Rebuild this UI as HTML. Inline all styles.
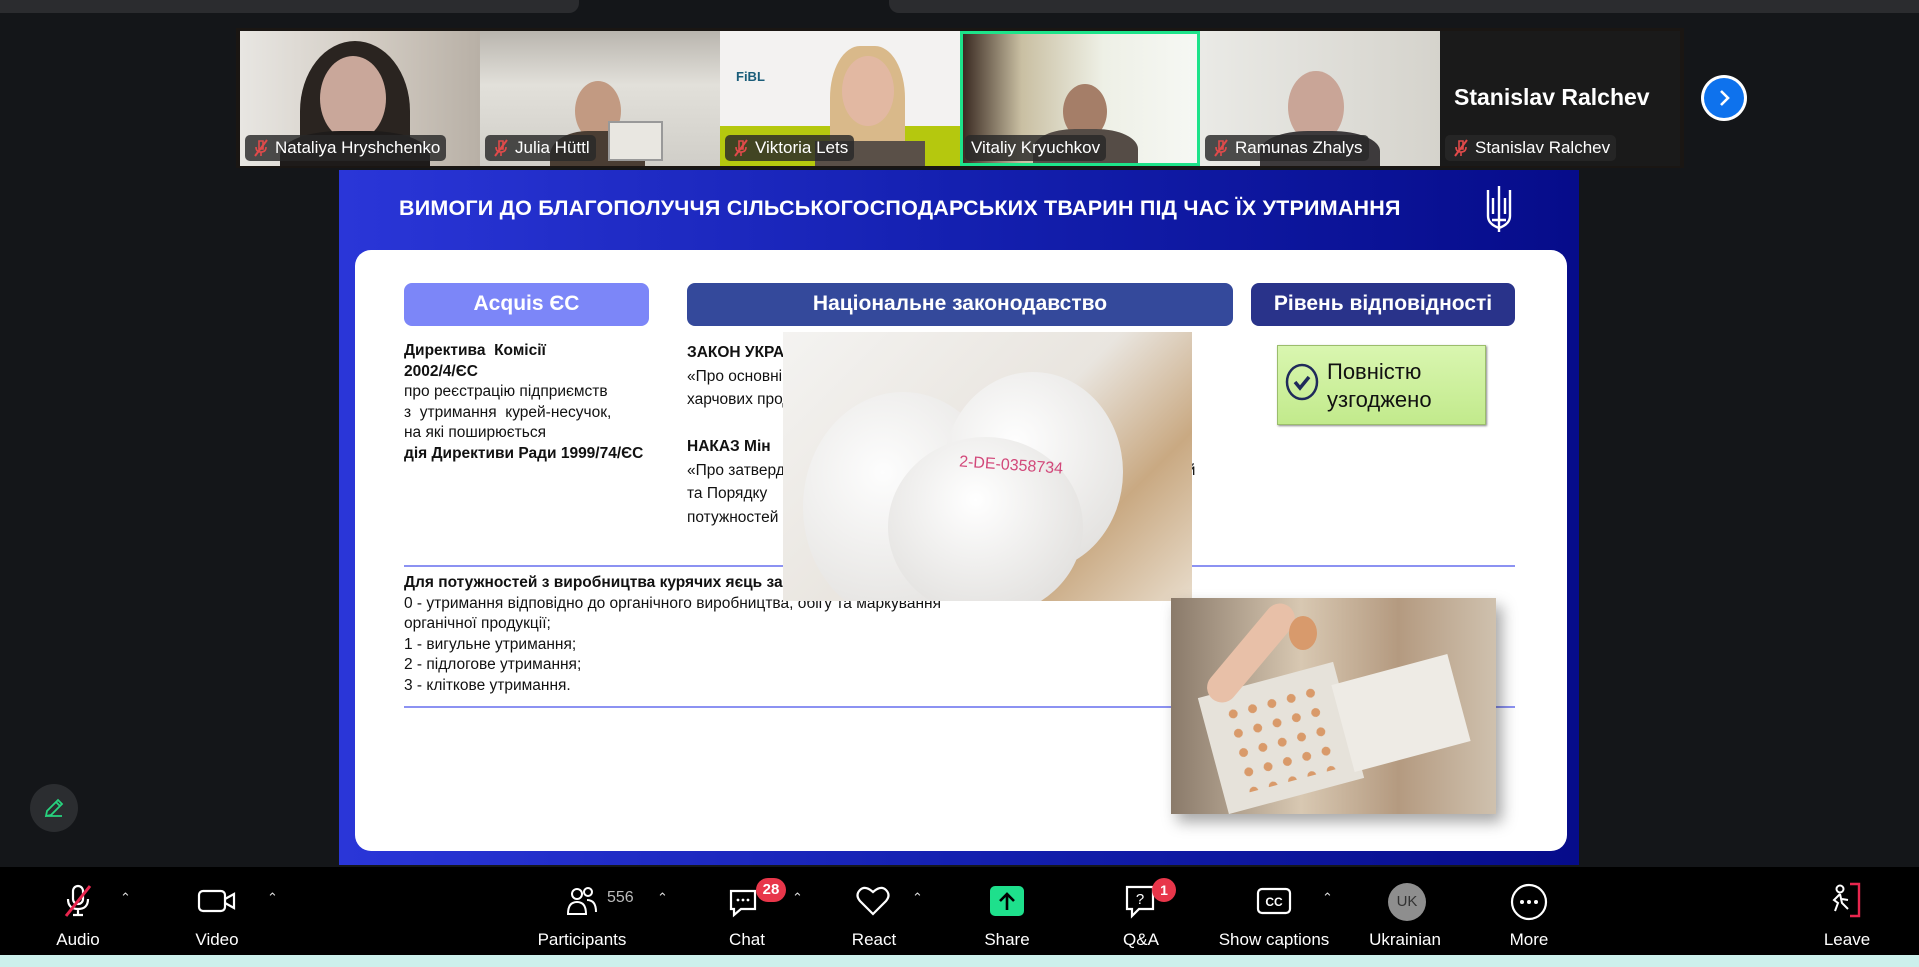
<!DOCTYPE html>
<html><head><meta charset="utf-8"><style>
*{margin:0;padding:0;box-sizing:border-box}
body{width:1919px;height:967px;background:#141619;position:relative;overflow:hidden;font-family:"Liberation Sans","DejaVu Sans",sans-serif;color:#fff}
.abs{position:absolute}
.tile{position:absolute;top:31px;height:135px;width:240px;overflow:hidden}
.lbl{position:absolute;left:5px;bottom:5px;height:26px;background:rgba(40,40,40,.82);border-radius:5px;font-size:17px;line-height:26px;padding:0 6px 0 30px;color:#fff;white-space:nowrap}
.lbl.nm{padding-left:6px}
.mic{position:absolute;left:8px;top:4px;width:16px;height:18px}
.st{font-size:15.5px;color:#111;line-height:20.5px;position:absolute;font-family:"Liberation Sans Narrow","Liberation Sans",sans-serif}
.hdr{position:absolute;top:283px;height:43px;border-radius:8px;color:#fff;font-weight:bold;font-size:21px;text-align:center;line-height:42px}
.tb{position:absolute;top:930px;font-size:17px;color:#fff;transform:translateX(-50%);white-space:nowrap}
.car{position:absolute;top:890px;font-size:13px;color:#ddd}
</style></head><body>
<!-- top panels -->
<div class="abs" style="left:0;top:0;width:579px;height:13px;background:#2b2c2f;border-radius:0 0 10px 0"></div>
<div class="abs" style="left:889px;top:0;width:1030px;height:13px;background:#2b2c2f;border-radius:0 0 0 10px"></div>
<!-- strip -->
<div class="abs" style="left:236px;top:28px;width:1448px;height:140px;background:#1a1613"></div>
<div class="tile" style="left:240px;background:linear-gradient(90deg,#e8e6e2,#cfc8bf 60%,#b8b0a6)">
 <div class="abs" style="left:60px;top:10px;width:110px;height:140px;border-radius:50% 50% 0 0;background:#2a2420"></div>
 <div class="abs" style="left:80px;top:25px;width:66px;height:85px;border-radius:50%;background:#c9a79a"></div>
 <div class="abs" style="left:40px;top:100px;width:150px;height:60px;border-radius:40% 40% 0 0;background:#1e1b1a"></div>
 <div class="lbl"><svg class="mic" viewBox="0 0 16 18"><path d="M6 2h4v8H6z M3 8q0 5 5 5t5-5 M8 13v4" stroke="#e04a4a" fill="none" stroke-width="1.6"/><path d="M2 17L14 1" stroke="#e04a4a" stroke-width="2"/></svg>Nataliya Hryshchenko</div></div>
<div class="tile" style="left:480px;background:linear-gradient(180deg,#b9b5ae,#e2e0da 40%,#d0cec8)">
 <div class="abs" style="left:95px;top:50px;width:46px;height:60px;border-radius:50%;background:#c29a82"></div>
 <div class="abs" style="left:70px;top:100px;width:95px;height:60px;border-radius:40% 40% 0 0;background:#4a3d33"></div>
 <div class="abs" style="left:128px;top:90px;width:55px;height:40px;background:#e9e7e1;border:2px solid #999"></div>
 <div class="lbl"><svg class="mic" viewBox="0 0 16 18"><path d="M6 2h4v8H6z M3 8q0 5 5 5t5-5 M8 13v4" stroke="#e04a4a" fill="none" stroke-width="1.6"/><path d="M2 17L14 1" stroke="#e04a4a" stroke-width="2"/></svg>Julia Hüttl</div></div>
<div class="tile" style="left:720px;background:#f3f2f1">
 <div class="abs" style="left:0;top:95px;width:240px;height:40px;background:#b5c80e"></div>
 <div class="abs" style="left:16px;top:38px;font-size:13px;font-weight:bold;color:#1a5d7a">FiBL</div>
 <div class="abs" style="left:110px;top:15px;width:75px;height:130px;border-radius:40% 40% 0 0;background:#d9b98a"></div>
 <div class="abs" style="left:122px;top:25px;width:52px;height:70px;border-radius:50%;background:#e2b8a2"></div>
 <div class="abs" style="left:95px;top:110px;width:110px;height:40px;background:#5a5048"></div>
 <div class="lbl"><svg class="mic" viewBox="0 0 16 18"><path d="M6 2h4v8H6z M3 8q0 5 5 5t5-5 M8 13v4" stroke="#e04a4a" fill="none" stroke-width="1.6"/><path d="M2 17L14 1" stroke="#e04a4a" stroke-width="2"/></svg>Viktoria Lets</div></div>
<div class="tile" style="left:960px;background:linear-gradient(90deg,#3a2a22,#c9bfa2 25%,#eef0e6 60%,#f6f8f4);border:3px solid #1de38a">
 <div class="abs" style="left:100px;top:50px;width:44px;height:55px;border-radius:50%;background:#a57e68"></div>
 <div class="abs" style="left:70px;top:95px;width:105px;height:50px;border-radius:40% 40% 0 0;background:#554c46"></div>
 <div class="lbl nm" style="left:2px;bottom:2px">Vitaliy Kryuchkov</div></div>
<div class="tile" style="left:1200px;background:linear-gradient(90deg,#eaeae6,#d5d3cc)">
 <div class="abs" style="left:88px;top:40px;width:56px;height:72px;border-radius:50%;background:#c9a597"></div>
 <div class="abs" style="left:60px;top:100px;width:120px;height:50px;border-radius:40% 40% 0 0;background:#3d3a3c"></div>
 <div class="lbl"><svg class="mic" viewBox="0 0 16 18"><path d="M6 2h4v8H6z M3 8q0 5 5 5t5-5 M8 13v4" stroke="#e04a4a" fill="none" stroke-width="1.6"/><path d="M2 17L14 1" stroke="#e04a4a" stroke-width="2"/></svg>Ramunas Zhalys</div></div>
<div class="tile" style="left:1440px;background:#1a1a1a">
 <div class="abs" style="left:14px;top:53px;font-size:23px;font-weight:bold;color:#fff">Stanislav Ralchev</div>
 <div class="lbl"><svg class="mic" viewBox="0 0 16 18"><path d="M6 2h4v8H6z M3 8q0 5 5 5t5-5 M8 13v4" stroke="#e04a4a" fill="none" stroke-width="1.6"/><path d="M2 17L14 1" stroke="#e04a4a" stroke-width="2"/></svg>Stanislav Ralchev</div></div>
<div class="abs" style="left:1701px;top:75px;width:46px;height:46px;border-radius:50%;background:#fff"></div>
<div class="abs" style="left:1704px;top:78px;width:40px;height:40px;border-radius:50%;background:#0e72ed"></div>
<svg class="abs" style="left:1714px;top:88px" width="20" height="20" viewBox="0 0 20 20"><path d="M7 3l7 7-7 7" stroke="#fff" stroke-width="2.6" fill="none"/></svg>

<!-- slide -->
<div class="abs" style="left:339px;top:170px;width:1240px;height:695px;background:linear-gradient(90deg,#2a36d8,#1420b0 50%,#060c8a)"></div>
<div class="abs" style="left:399px;top:196px;font-size:21.5px;font-weight:bold;color:#fff;letter-spacing:.2px">ВИМОГИ ДО БЛАГОПОЛУЧЧЯ СІЛЬСЬКОГОСПОДАРСЬКИХ ТВАРИН ПІД ЧАС ЇХ УТРИМАННЯ</div>
<svg class="abs" style="left:1484px;top:184px" width="30" height="50" viewBox="0 0 30 50"><path d="M15 2v46M4 6v26q0 8 11 12 11-4 11-12V6M9 14v16M21 14v16M8 36h14" stroke="#fff" stroke-width="2.4" fill="none"/></svg>
<div class="abs" style="left:355px;top:250px;width:1212px;height:601px;background:#fff;border-radius:16px"></div>
<div class="hdr" style="left:404px;width:245px;background:#7c86f8">Acquis ЄС</div>
<div class="hdr" style="left:687px;width:546px;background:#34499b">Національне законодавство</div>
<div class="hdr" style="left:1251px;width:264px;background:#29338a">Рівень відповідності</div>
<div class="st" style="left:404px;top:341px"><b>Директива&nbsp; Комісії<br>2002/4/ЄС</b><br>про реєстрацію підприємств<br>з&nbsp; утримання&nbsp; курей-несучок,<br>на які поширюється<br><b>дія Директиви Ради 1999/74/ЄС</b></div>
<div class="st" style="left:687px;top:341px;line-height:23.5px"><b>ЗАКОН УКРАЇНИ</b><br>«Про основні принципи<br>харчових продуктів»<br><br><b>НАКАЗ Мін</b><br>«Про затвердження&nbsp;&nbsp;&nbsp;&nbsp;&nbsp;&nbsp;&nbsp;&nbsp;&nbsp;&nbsp;&nbsp;&nbsp;&nbsp;&nbsp;&nbsp;&nbsp;&nbsp;&nbsp;&nbsp;&nbsp;&nbsp;&nbsp;&nbsp;&nbsp;&nbsp;&nbsp;&nbsp;&nbsp;&nbsp;&nbsp;&nbsp;&nbsp;&nbsp;&nbsp;&nbsp;&nbsp;&nbsp;&nbsp;&nbsp;&nbsp;&nbsp;&nbsp;&nbsp;&nbsp;&nbsp;&nbsp;&nbsp;&nbsp;&nbsp;&nbsp;&nbsp;&nbsp;&nbsp;&nbsp;&nbsp;&nbsp;&nbsp;&nbsp;&nbsp;&nbsp;&nbsp;&nbsp;&nbsp;&nbsp;&nbsp;&nbsp;&nbsp;&nbsp;&nbsp;&nbsp;&nbsp;&nbsp;&nbsp;&nbsp;&nbsp;&nbsp;&nbsp;&nbsp;&nbsp;&nbsp; ей<br>та Порядку&nbsp;&nbsp;&nbsp;&nbsp;&nbsp;&nbsp;&nbsp;&nbsp;&nbsp;&nbsp;&nbsp;&nbsp;&nbsp;&nbsp;&nbsp;&nbsp;&nbsp;&nbsp;&nbsp;&nbsp;&nbsp;&nbsp;&nbsp;&nbsp;&nbsp;&nbsp;&nbsp;&nbsp;&nbsp;&nbsp;&nbsp;&nbsp;&nbsp;&nbsp;&nbsp;&nbsp;&nbsp;&nbsp;&nbsp;&nbsp;&nbsp;&nbsp;&nbsp;&nbsp;&nbsp;&nbsp;&nbsp;&nbsp;&nbsp;&nbsp;&nbsp;&nbsp;&nbsp;&nbsp;&nbsp;&nbsp;&nbsp;&nbsp;&nbsp;&nbsp;&nbsp;&nbsp;&nbsp;&nbsp;&nbsp;&nbsp;&nbsp;&nbsp;&nbsp;&nbsp;&nbsp;&nbsp;&nbsp;&nbsp;&nbsp;&nbsp;&nbsp;&nbsp;&nbsp;&nbsp;&nbsp;&nbsp;&nbsp;&nbsp;&nbsp;&nbsp;&nbsp;&nbsp;&nbsp;&nbsp; їхніх<br>потужностей</div>
<div class="abs" style="left:1277px;top:345px;width:209px;height:80px;background:linear-gradient(180deg,#d9f6b0,#c2ea8c);border:1px solid #9bbd6c;box-shadow:1px 1px 2px #888"></div>
<svg class="abs" style="left:1284px;top:362px" width="36" height="40" viewBox="0 0 36 40"><ellipse cx="18" cy="20" rx="15" ry="17" fill="none" stroke="#1f2a5a" stroke-width="2.5"/><path d="M11 20l5 6 9-11" stroke="#1f2a5a" stroke-width="3.5" fill="none"/></svg>
<div class="abs" style="left:1327px;top:358px;font-size:22px;color:#111;line-height:28px;font-family:'Liberation Sans Narrow','Liberation Sans',sans-serif">Повністю<br>узгоджено</div>
<div class="abs" style="left:404px;top:565px;width:1111px;height:2px;background:#8c92f2"></div>
<div class="abs" style="left:404px;top:706px;width:1111px;height:2px;background:#8c92f2"></div>
<div class="st" style="left:404px;top:573px"><b>Для потужностей з виробництва курячих яєць за</b><br>0 - утримання відповідно до органічного виробництва, обігу та маркування<br>органічної продукції;<br>1 - вигульне утримання;<br>2 - підлогове утримання;<br>3 - кліткове утримання.</div>
<!-- egg image -->
<div class="abs" style="left:783px;top:332px;width:409px;height:269px;background:linear-gradient(135deg,#f4f3f1,#e9e5df 50%,#c9a982 75%,#e8dccb);overflow:hidden">
 <div class="abs" style="left:20px;top:60px;width:200px;height:230px;border-radius:50%;background:radial-gradient(circle at 40% 35%,#fdfdfd,#dedcd9)"></div>
 <div class="abs" style="left:160px;top:40px;width:180px;height:200px;border-radius:50%;background:radial-gradient(circle at 40% 35%,#fefefe,#dcdad7)"></div>
 <div class="abs" style="left:105px;top:105px;width:195px;height:180px;border-radius:50%;background:radial-gradient(circle at 45% 35%,#ffffff,#dad8d5)"></div>
 <div class="abs" style="left:176px;top:125px;font-size:16px;color:#d2487a;transform:rotate(4deg)">2-DE-0358734</div>
</div>
<!-- carton image -->
<div class="abs" style="left:1171px;top:598px;width:325px;height:216px;background:linear-gradient(90deg,#8a7a6a,#d8c8b2 40%,#b49a80 70%,#cfc1ae);box-shadow:6px 8px 14px rgba(0,0,0,.35);overflow:hidden">
 <div class="abs" style="left:40px;top:80px;width:140px;height:120px;background:#e6e2da;transform:rotate(-15deg)"></div>
 <div class="abs" style="left:60px;top:95px;width:95px;height:90px;background:radial-gradient(circle,#d99a6a 30%,transparent 32%) 0 0/20px 20px;transform:rotate(-15deg)"></div>
 <div class="abs" style="left:170px;top:70px;width:120px;height:90px;background:#eeebe5;transform:rotate(-15deg)"></div>
 <div class="abs" style="left:20px;top:40px;width:120px;height:30px;border-radius:20px;background:#e8c0a8;transform:rotate(-50deg)"></div>
 <div class="abs" style="left:118px;top:18px;width:28px;height:34px;border-radius:50%;background:#d89a6c"></div>
</div>
<!-- pencil -->
<div class="abs" style="left:30px;top:784px;width:48px;height:48px;border-radius:50%;background:#2b2d30"></div>
<svg class="abs" style="left:43px;top:797px" width="22" height="22" viewBox="0 0 22 22"><path d="M3 19l1-5L15 3l4 4L8 18z M13 5l4 4 M3 19h16" stroke="#27d37e" stroke-width="1.8" fill="none"/></svg>
<!-- toolbar -->
<div class="abs" style="left:0;top:867px;width:1919px;height:88px;background:#000"></div>
<div class="abs" style="left:0;top:955px;width:1919px;height:12px;background:#ccf0ec"></div>
<svg class="abs" style="left:60px;top:883px" width="36" height="36" viewBox="0 0 36 36"><rect x="13" y="3" width="10" height="18" rx="5" stroke="#fff" stroke-width="2.2" fill="none"/><path d="M8 16q0 10 10 10t10-10M18 26v6M13 32h10" stroke="#fff" stroke-width="2.2" fill="none"/><path d="M6 33L30 3" stroke="#e8264e" stroke-width="3"/></svg>
<div class="car" style="left:120px">⌃</div>
<svg class="abs" style="left:197px;top:887px" width="40" height="28" viewBox="0 0 40 28"><rect x="2" y="4" width="26" height="20" rx="4" stroke="#fff" stroke-width="2.2" fill="none"/><path d="M28 12l9-5v14l-9-5" stroke="#fff" stroke-width="2.2" fill="none"/></svg>
<div class="car" style="left:267px">⌃</div>
<svg class="abs" style="left:565px;top:885px" width="34" height="32" viewBox="0 0 34 32"><circle cx="12" cy="9" r="5" stroke="#fff" stroke-width="2" fill="none"/><path d="M3 29q0-12 9-12t9 12z" stroke="#fff" stroke-width="2" fill="none"/><circle cx="23" cy="7" r="4" stroke="#fff" stroke-width="2" fill="none"/><path d="M22 15q9 0 9 12" stroke="#fff" stroke-width="2" fill="none"/></svg>
<div class="abs" style="left:607px;top:889px;font-size:16px;color:#bbb">556</div>
<div class="car" style="left:657px">⌃</div>
<svg class="abs" style="left:727px;top:885px" width="34" height="34" viewBox="0 0 34 34"><path d="M4 6h24v18H14l-7 6v-6H4z" stroke="#fff" stroke-width="2.2" fill="none"/><circle cx="11" cy="15" r="1.4" fill="#fff"/><circle cx="16" cy="15" r="1.4" fill="#fff"/><circle cx="21" cy="15" r="1.4" fill="#fff"/></svg>
<div class="abs" style="left:756px;top:878px;width:30px;height:24px;border-radius:12px;background:#e8364a;font-size:15px;font-weight:bold;text-align:center;line-height:24px">28</div>
<div class="car" style="left:792px">⌃</div>
<svg class="abs" style="left:855px;top:885px" width="36" height="32" viewBox="0 0 36 32"><path d="M18 29L5 16Q0 10 5 5t13 2q8-7 13-2t0 11z" stroke="#fff" stroke-width="2.2" fill="none"/></svg>
<div class="car" style="left:912px">⌃</div>
<div class="abs" style="left:990px;top:886px;width:34px;height:30px;border-radius:5px;background:#1ee08c"></div>
<svg class="abs" style="left:997px;top:890px" width="20" height="22" viewBox="0 0 20 22"><path d="M10 20V4M3 11l7-7 7 7" stroke="#000" stroke-width="2.6" fill="none"/></svg>
<svg class="abs" style="left:1124px;top:884px" width="34" height="36" viewBox="0 0 34 36"><path d="M3 3h26v22H15l-7 7v-7H3z" stroke="#fff" stroke-width="2.2" fill="none"/><text x="16" y="20" font-size="15" fill="#fff" text-anchor="middle" font-family="Liberation Sans">?</text></svg>
<div class="abs" style="left:1152px;top:878px;width:24px;height:24px;border-radius:12px;background:#e8364a;font-size:14px;font-weight:bold;text-align:center;line-height:24px">1</div>
<svg class="abs" style="left:1256px;top:887px" width="36" height="28" viewBox="0 0 36 28"><rect x="2" y="2" width="32" height="24" rx="4" stroke="#fff" stroke-width="2.2" fill="none"/><text x="18" y="19" font-size="12" fill="#fff" text-anchor="middle" font-weight="bold" font-family="Liberation Sans">CC</text></svg>
<div class="car" style="left:1322px">⌃</div>
<div class="abs" style="left:1388px;top:883px;width:38px;height:38px;border-radius:50%;background:#8e8e8e;font-size:15px;text-align:center;line-height:38px;color:#333">UK</div>
<svg class="abs" style="left:1510px;top:883px" width="38" height="38" viewBox="0 0 38 38"><circle cx="19" cy="19" r="17" stroke="#fff" stroke-width="2.2" fill="none"/><circle cx="12" cy="19" r="2" fill="#fff"/><circle cx="19" cy="19" r="2" fill="#fff"/><circle cx="26" cy="19" r="2" fill="#fff"/></svg>
<svg class="abs" style="left:1828px;top:882px" width="34" height="38" viewBox="0 0 34 38"><path d="M22 2h9v32h-9" stroke="#e8264e" stroke-width="2.4" fill="none"/><circle cx="12" cy="7" r="3.5" stroke="#fff" stroke-width="2" fill="none"/><path d="M12 12l-6 6 4 3-3 8M12 12l2 9 6 6M14 17l6 1" stroke="#fff" stroke-width="2" fill="none"/></svg>
<div class="tb" style="left:78px">Audio</div>
<div class="tb" style="left:217px">Video</div>
<div class="tb" style="left:582px">Participants</div>
<div class="tb" style="left:747px">Chat</div>
<div class="tb" style="left:874px">React</div>
<div class="tb" style="left:1007px">Share</div>
<div class="tb" style="left:1141px">Q&amp;A</div>
<div class="tb" style="left:1274px">Show captions</div>
<div class="tb" style="left:1405px">Ukrainian</div>
<div class="tb" style="left:1529px">More</div>
<div class="tb" style="left:1847px">Leave</div>
</body></html>
